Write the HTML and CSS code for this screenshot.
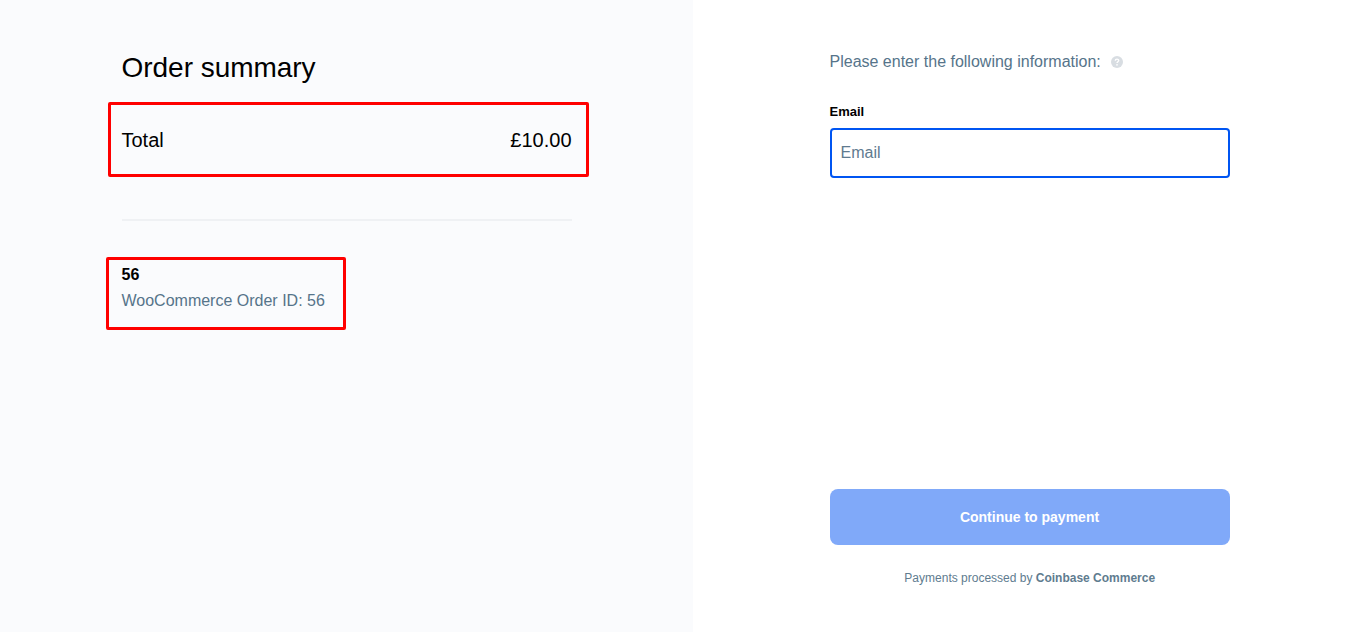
FILE: index.html
```html
<!DOCTYPE html>
<html lang="en">
<head>
<meta charset="utf-8">
<title>Order summary</title>
<link rel="stylesheet" href="styles.css">
</head>
<body>
<main class="checkout">
  <section class="summary">
    <h1 class="title">Order summary</h1>
    <div class="total"><span>Total</span><span>£10.00</span></div>
    <hr class="divider">
    <div class="order">
      <strong class="order-name">56</strong>
      <span class="order-desc">WooCommerce Order ID: 56</span>
    </div>
  </section>
  <section class="details">
    <div class="intro">
      <span>Please enter the following information:</span>
      <svg class="help" viewBox="0 0 12 12" aria-hidden="true"><circle cx="6" cy="6" r="6" fill="#d8dde2"/><path d="M4.3 4.8C4.3 2.6 7.7 2.7 7.7 4.6C7.7 5.7 6 5.8 6 7" fill="none" stroke="#fff" stroke-width="1.4"/><circle cx="6" cy="8.8" r=".85" fill="#fff"/></svg>
    </div>
    <label class="label" for="email">Email</label>
    <input class="input" id="email" type="email" placeholder="Email">
    <button class="submit" type="button">Continue to payment</button>
    <p class="footer">Payments processed by <b>Coinbase Commerce</b></p>
  </section>
</main>
</body>
</html>
```
FILE: styles.css
```css
* { box-sizing: border-box; }
body { margin: 0; font-family: "Liberation Sans", Arial, sans-serif; background: #fff; }
.checkout { display: flex; height: 632px; }
.summary { width: 693px; padding: 50px 0 0 106px; background: #fafbfd; color: #000; }
.title { margin: 0 0 17px 15.5px; font-size: 28px; line-height: 35px; font-weight: 400; letter-spacing: -0.03px; }
.total { display: flex; justify-content: space-between; align-items: center; width: 481px; height: 75px; margin-left: 2px; padding: 2px 14.5px 0 10.5px; border: 3px solid #ff0000; border-radius: 2px; font-size: 20px; }
.divider { width: 450px; height: 2px; margin: 42px 0 36px 16px; border: 0; background: #eff1f4; }
.order { display: flex; flex-direction: column; width: 240px; height: 73px; padding: 3px 12.5px; border: 3px solid #ff0000; border-radius: 2px; font-size: 16px; }
.order-name { line-height: 23px; }
.order-desc { color: #56748a; line-height: 29px; }
.details { display: flex; flex-direction: column; width: 400px; margin-left: 137px; padding-top: 50px; }
.intro { display: flex; align-items: center; height: 24px; margin-left: -0.5px; font-size: 16px; color: #56748a; }
.help { width: 12px; height: 12px; margin-left: 10.5px; }
.label { margin: 28px 0 0 -0.5px; font-size: 13px; line-height: 20px; font-weight: 700; color: #000; }
.input { width: 400px; height: 50px; margin-top: 6px; padding: 0 8.5px; border: 2px solid #0055f2; border-radius: 4px; font: 16px "Liberation Sans", Arial, sans-serif; outline: none; }
.input::placeholder { color: #5f7b8f; }
.submit { height: 56px; margin-top: 311px; padding: 0 1px 0 0; border: 0; border-radius: 8px; background: #80a9f9; color: #fff; font: 700 14px "Liberation Sans", Arial, sans-serif; }
.footer { margin: 23px 0 0 -0.5px; font-size: 12px; line-height: 20px; text-align: center; color: #607c8f; }
```
